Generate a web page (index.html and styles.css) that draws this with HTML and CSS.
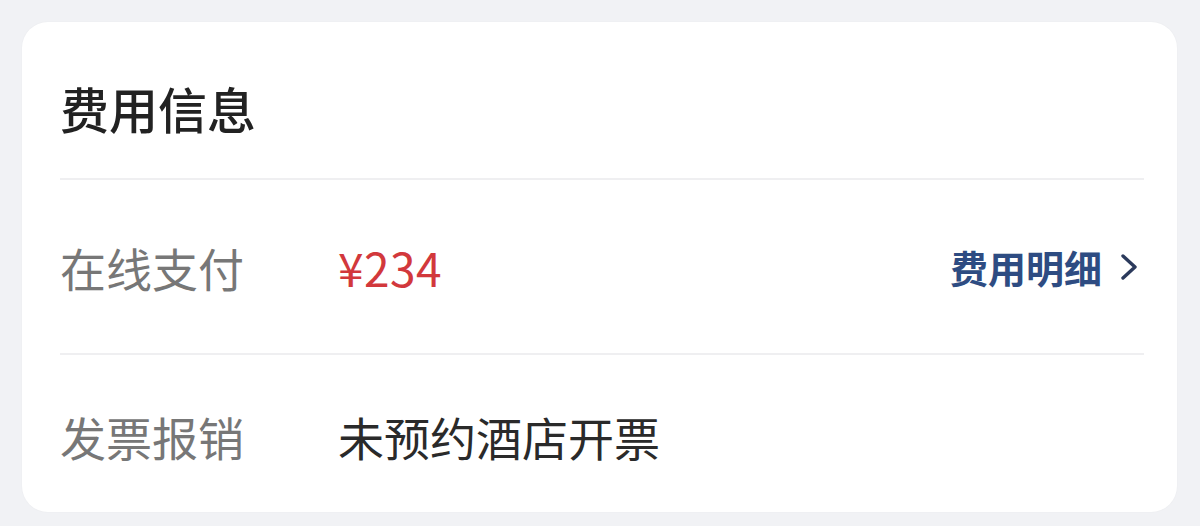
FILE: index.html
```html
<!DOCTYPE html>
<html lang="zh-CN">
<head>
  <meta charset="UTF-8" />
  <meta name="viewport" content="width=device-width, initial-scale=1.0"/>
  <title>费用信息</title>
  <link rel="stylesheet" href="styles.css">
</head>
<body>

  <section class="fee-card">
    <h2 class="fee-title">费用信息</h2>

    <!-- 在线支付 -->
    <div class="fee-row">
      <span class="fee-label">在线支付</span>
      <span class="fee-price">¥234</span>
      <a class="fee-link" href="#">
        费用明细
        <svg class="chevron" viewBox="0 0 18 28" width="18" height="28">
          <path d="M3 3 L15 14 L3 25" fill="none" stroke="currentColor" stroke-width="3.4" stroke-linecap="round" stroke-linejoin="round"/>
        </svg>
      </a>
    </div>

    <!-- 发票报销 -->
    <div class="fee-row fee-row-last">
      <span class="fee-label">发票报销</span>
      <span class="fee-value">未预约酒店开票</span>
    </div>
  </section>

</body>
</html>
```

FILE: styles.css
```css
body {
  margin: 0;
  padding: 22px 23px 14px 22px;
  background: #f1f2f5;
  font-family: "Noto Sans CJK SC", "Noto Sans", sans-serif;
}

.fee-card {
  background: #fff;
  border-radius: 26px;
  padding: 0 33px 0 38px;
  box-shadow: 0 0 2px rgba(0, 0, 0, 0.04);
}

.fee-title {
  margin: 0;
  height: 158px;
  box-sizing: border-box;
  padding-top: 14px;
  display: flex;
  align-items: center;
  font-size: 49px;
  font-weight: 500;
  color: #222;
  border-bottom: 2px solid #efeff1;
}

.fee-row {
  height: 175px;
  box-sizing: border-box;
  display: flex;
  align-items: center;
  border-bottom: 2px solid #efeff1;
}

.fee-row-last {
  height: 157px;
  padding-top: 4px;
  border-bottom: none;
}

.fee-label {
  width: 278px;
  flex-shrink: 0;
  font-size: 46px;
  color: #777;
}

.fee-price {
  font-size: 46px;
  color: #d2383c;
  letter-spacing: 0.5px;
}

.fee-value {
  font-size: 46px;
  color: #2a2a2a;
}

.fee-link {
  margin-left: auto;
  margin-right: 6px;
  display: flex;
  align-items: center;
  gap: 18px;
  font-size: 38px;
  font-weight: 700;
  color: #2e4c82;
  text-decoration: none;
}

.chevron {
  color: #2b3a5c;
}
```
